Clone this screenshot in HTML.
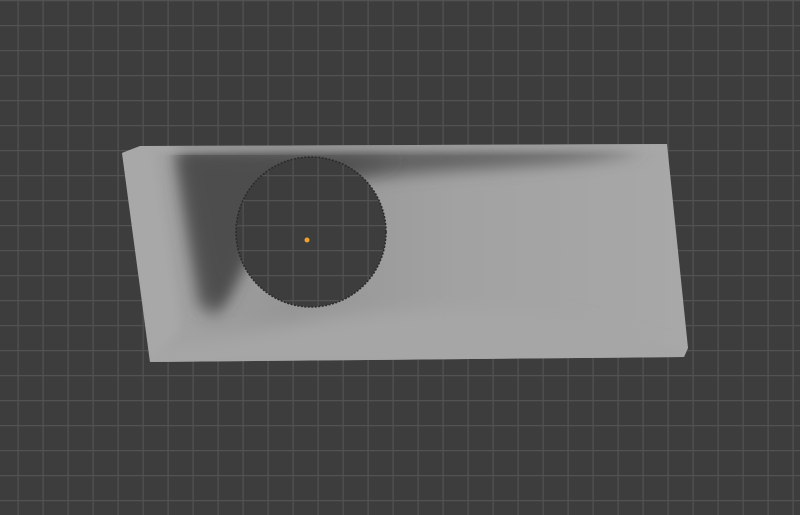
<!DOCTYPE html>
<html><head><style>html,body{margin:0;padding:0;background:#3d3d3d;overflow:hidden}svg{display:block}</style></head>
<body>
<svg width="800" height="515" viewBox="0 0 800 515" xmlns="http://www.w3.org/2000/svg">
<defs>
<pattern id="g" x="17.5" y="0" width="25" height="25" patternUnits="userSpaceOnUse">
<rect width="25" height="25" fill="#3d3d3d"/>
<rect x="0" y="0" width="1.2" height="25" fill="#525252"/>
<rect x="0" y="0" width="25" height="1.2" fill="#525252"/>
</pattern>
<linearGradient id="body" x1="0" y1="0" x2="1" y2="0">
<stop offset="0" stop-color="#a8a8a8"/>
<stop offset="0.3" stop-color="#969696"/>
<stop offset="0.6" stop-color="#a2a2a2"/>
<stop offset="1" stop-color="#a8a8a8"/>
</linearGradient>
<filter id="b" x="-20%" y="-20%" width="140%" height="140%"><feGaussianBlur stdDeviation="8"/></filter>
<filter id="b2" x="-20%" y="-20%" width="140%" height="140%"><feGaussianBlur stdDeviation="4"/></filter>
<clipPath id="c"><path d="M122,153 L140,146 L667,144 L688,348 L684,357 L150,362 Z"/></clipPath>
</defs>
<rect width="800" height="515" fill="url(#g)"/>
<path d="M122,153 L140,146 L667,144 L688,348 L684,357 L150,362 Z" fill="url(#body)"/>
<g clip-path="url(#c)">
<path d="M175,150 C320,148 500,148 645,150 C560,170 420,165 330,185 C280,200 245,240 225,300 L200,310 C190,250 182,200 175,150 Z" fill="#5e5e5e" filter="url(#b)"/>
<path d="M180,152 C260,152 330,155 400,160 C320,175 280,195 255,240 C240,270 228,300 212,318 C198,260 190,200 180,152 Z" fill="#4e4e4e" filter="url(#b)"/>
<path d="M122,153 L150,146 C160,200 172,270 180,330 L150,362 Z" fill="#a8a8a8" filter="url(#b2)"/>
<path d="M155,350 C300,320 420,300 520,310 C600,320 650,350 690,352 L690,370 L150,370 Z" fill="#a6a6a6" filter="url(#b)"/>
<path d="M140,146 L667,144 L660,150 C500,149 300,150 170,153 Z" fill="#a9a9a9" filter="url(#b2)"/>
</g>
<circle cx="311" cy="232" r="75" fill="url(#g)" stroke="#2a2a2a" stroke-width="1.5" stroke-dasharray="2 1.5"/>
<circle cx="307" cy="240" r="2.5" fill="#f0a030"/>
</svg>
</body></html>
